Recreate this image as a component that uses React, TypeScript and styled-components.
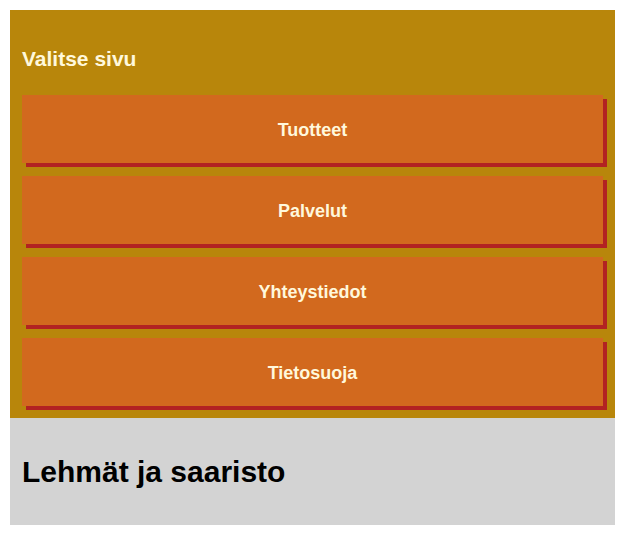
import React from 'react';
import styled, {createGlobalStyle} from "styled-components";

const GlobalStyle = createGlobalStyle`
  body {
    margin: 0;
    background: #fff;
    font-family: "Liberation Sans", Arial, sans-serif;
  }
`;

const Page = styled.div`
  padding: 10px;
  width: 605px;
`;

const Nav = styled.nav`
  background-color: #b8860b;
  padding: 0 12px 12px 12px;
`;

const NavTitle = styled.h2`
  margin: 0;
  padding: 37px 0 24px 0;
  font-size: 21px;
  line-height: 24px;
  font-weight: bold;
  color: #fff8dc;
`;

const ButtonList = styled.div`
  display: flex;
  flex-direction: column;
  gap: 13px;
`;

const NavButton = styled.div`
  display: flex;
  align-items: center;
  justify-content: center;
  box-sizing: border-box;
  height: 68px;
  width: 581px;
  padding-top: 2px;
  background-color: #d2691e;
  box-shadow: 4px 4px 0 #b22222;
  color: #fff8dc;
  font-size: 18px;
  font-weight: bold;
  cursor: pointer;
`;

const Main = styled.main`
  display: flex;
  align-items: center;
  height: 107px;
  background-color: #d3d3d3;
  padding: 0 12px;
`;

const Heading = styled.h1`
  margin: 0;
  font-size: 30px;
  font-weight: bold;
  color: #000;
`;

const pages = ["Tuotteet", "Palvelut", "Yhteystiedot", "Tietosuoja"];

const App = () => {
  return (
    <>
      <GlobalStyle/>
      <Page>
        <Nav>
          <NavTitle>Valitse sivu</NavTitle>
          <ButtonList>
            {pages.map(p => <NavButton key={p}>{p}</NavButton>)}
          </ButtonList>
        </Nav>
        <Main>
          <Heading>Lehmät ja saaristo</Heading>
        </Main>
      </Page>
    </>
  );
}

export default App
